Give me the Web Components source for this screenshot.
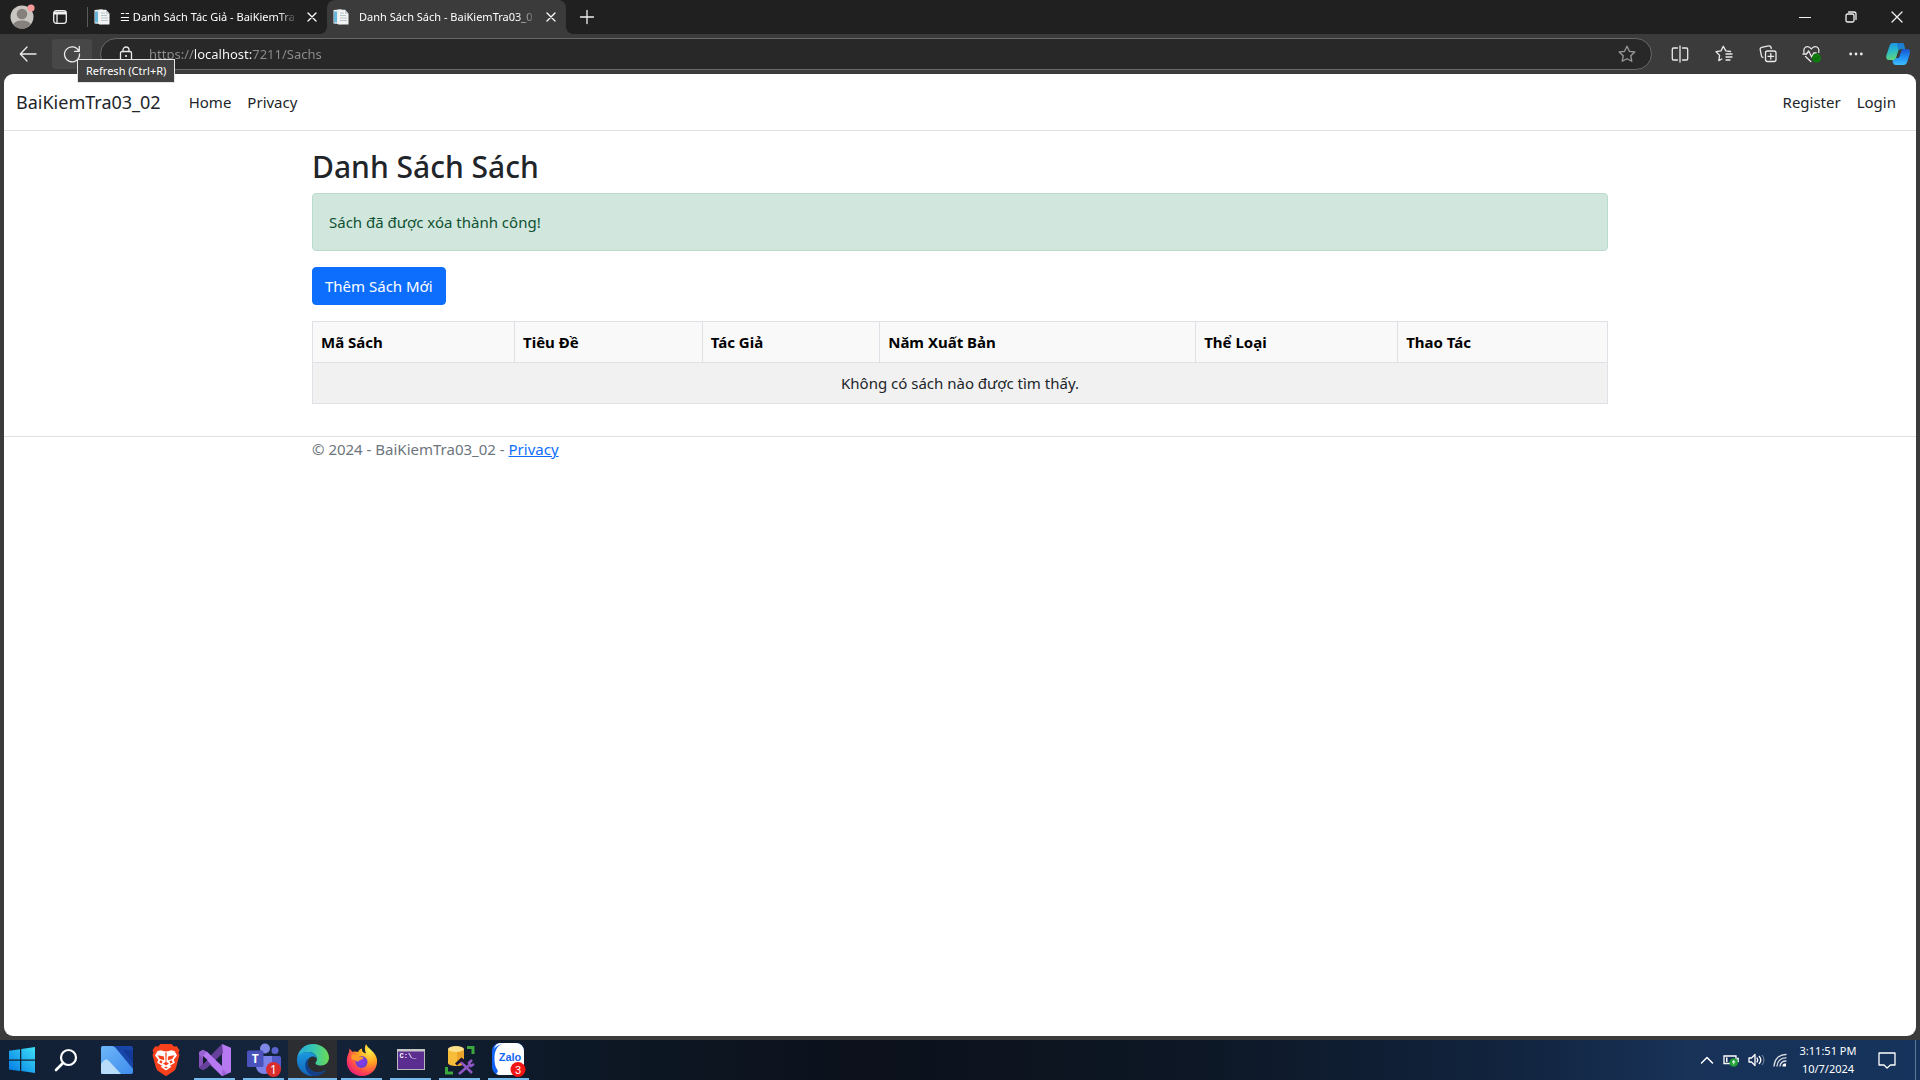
<!DOCTYPE html>
<html lang="vi">
<head>
<meta charset="utf-8">
<title>Danh Sách Sách - BaiKiemTra03_02</title>
<style>
html, body { margin: 0; height: 100%; }
body { font-family: "Noto Sans", "Open Sans", sans-serif; font-size: 15px; line-height: 24px; color: #212529; background: #3b3b3b; }
</style>
</head>
<body>
<desk-screen>
  <edge-window>
    <edge-titlebar slot="title">
      <edge-tab label="☱ Danh Sách Tác Giả - BaiKiemTra"></edge-tab>
      <edge-tab label="Danh Sách Sách - BaiKiemTra03_0" active></edge-tab>
    </edge-titlebar>
    <edge-toolbar slot="toolbar" url="https://localhost:7211/Sachs"></edge-toolbar>
    <site-header>BaiKiemTra03_02</site-header>
    <site-main>
      <span slot="heading">Danh Sách Sách</span>
      <site-alert>Sách đã được xóa thành công!</site-alert>
      <site-button>Thêm Sách Mới</site-button>
      <book-table></book-table>
    </site-main>
    <site-footer>© 2024 - BaiKiemTra03_02 - </site-footer>
  </edge-window>
  <task-bar slot="taskbar"></task-bar>
</desk-screen>
<script>
const define = (name, html, setup) => {
  const t = document.createElement('template');
  t.innerHTML = html;
  customElements.define(name, class extends HTMLElement {
    constructor() {
      super();
      this.attachShadow({ mode: 'open' }).append(t.content.cloneNode(true));
    }
    connectedCallback() { if (setup) setup(this, this.shadowRoot); }
  });
};

const line = (d, extra = '') => `<g fill="none" stroke="currentColor" stroke-linecap="round" stroke-linejoin="round" stroke-width="1.3" ${extra}>${d}</g>`;
const ICONS = {
  profile: ['24 24', `<clipPath id="c"><circle cx="12" cy="12" r="11.5"/></clipPath><circle cx="12" cy="12" r="11.5" fill="#c9c6c2"/><g clip-path="url(#c)" fill="#85807c"><circle cx="12" cy="9" r="5.3"/><path d="M2 24c0-6 4-8.5 10-8.5S22 18 22 24z"/></g><circle cx="21" cy="3" r="3.6" fill="#f99a9c"/>`],
  workspace: ['16 16', line('<rect x="1.7" y="1.7" width="12.6" height="12.6" rx="2.5"/><path d="M5 4.5v9.500"/>') + '<path d="M2 2.500h12v3H2z" fill="currentColor"/>'],
  page: ['16 16', '<path d="M.5 1l8-.8v15L.5 14.500z" fill="#e9eef1"/><path d="M1 2.500h3v11H1z" fill="#67b7dc"/><path d="M5 .8h7l3.500 4v10.700H5z" fill="#f2f3f3"/><path d="M7 4h4M7 6.500h6M7 9h7M7 11.500h7" stroke="#b9c3c9" stroke-width="1"/><path d="M12 .8l3.500 4H12z" fill="#c4cbd0"/>'],
  close: ['10 10', line('<path d="M0 0l10 10M10 0L0 10"/>')],
  cross: ['8 8', line('<path d="M0 0l8 8M8 0L0 8"/>')],
  plus: ['14 14', line('<path d="M7 .5v13M.5 7h13"/>')],
  min: ['12 12', line('<path d="M1 6.500h10"/>', 'shape-rendering="crispEdges"')],
  restore: ['12 12', line('<rect x="1" y="3" width="8" height="8" rx="1.500"/><path d="M3.500 1H9a2 2 0 0 1 2 2v5.500"/>')],
  back: ['18 16', line('<path d="M17 8H1.500M8 1L1.300 8 8 15"/>')],
  refresh: ['18 18', line('<path d="M15.800 6.200A7.500 7.500 0 1 0 16.500 9M16.300 1.500v4.800h-4.800"/>')],
  lock: ['16 16', line('<rect x="2.500" y="5.500" width="11" height="9" rx="1.500"/><path d="M5 5.500V4a3 3 0 0 1 6 0v1.500"/>') + '<circle cx="8" cy="10" r="1.100" fill="currentColor"/>'],
  star: ['18 18', line('<path d="M9 1.300l2.400 5 5.400.7-4 3.800 1 5.500L9 13.700l-4.800 2.600 1-5.500-4-3.800 5.400-.7z"/>')],
  split: ['18 18', line('<path d="M6.500 3h-4A1.300 1.300 0 0 0 1.300 4.300v9.400A1.300 1.300 0 0 0 2.500 15h4M11.500 3h4a1.300 1.300 0 0 1 1.200 1.300v9.400a1.300 1.300 0 0 1-1.200 1.300h-4M9 1v16"/>')],
  favs: ['18 18', line('<path d="M15.500 6.500l-4.700-.6L8.300 1.300 6 5.900l-4.900.8 3.500 3.700-.8 5.300 3-1.700M11 9h6M11 12h6M11 15h4"/>')],
  collect: ['18 18', line('<rect x="6.500" y="6" width="10.500" height="10.500" rx="2"/><path d="M11.800 8.500v5.600M9 11.300h5.600M4 12.500A2.500 2.500 0 0 1 2.300 10L1.200 4.700A2 2 0 0 1 2.700 2.300L9.500.9A2 2 0 0 1 12 2.500l.3 1"/>')],
  heart: ['20 18', line('<path d="M2 7.500C1 4 3 1.600 5.500 1.600 7.500 1.600 8.500 2.800 9.300 4c.8-1.200 1.900-2.400 3.900-2.400 2.600 0 4.500 2.400 3.500 5.900M3.500 11.500l5.300 5M1 9h3.500L6.700 6l3 6 2-4h2.500"/>') + '<circle cx="14.500" cy="13" r="4.500" fill="#0f7b0f"/><path d="M12.500 13l1.500 1.500 2.500-3" stroke="#075c07" fill="none"/>'],
  dots: ['14 14', '<g fill="currentColor"><circle cx="1.700" cy="7" r="1.400"/><circle cx="7" cy="7" r="1.400"/><circle cx="12.300" cy="7" r="1.400"/></g>'],
  copilot: ['24 24', '<defs><linearGradient id="a" x2=".2" y2="1"><stop stop-color="#1b8fe8"/><stop offset=".5" stop-color="#2bb9c8"/><stop offset="1" stop-color="#5fd67e"/></linearGradient><linearGradient id="b" x2="0" y2="1"><stop stop-color="#1a54c9"/><stop offset=".5" stop-color="#1f8df5"/><stop offset="1" stop-color="#3fc0ff"/></linearGradient></defs><path d="M7 1h9c2 0 2 1.500 2.500 4l.5 2h-4c-2 0-2.500 1-3 2.500L10 16c-.5 1.500-1.500 2-3 2H3c-3 0-3-3-2.500-5L3.500 4C4 2 5 1 7 1z" fill="url(#a)"/><path d="M17 7h4c3 0 3.500 2 2.700 5l-2.500 8c-.7 2-1.700 3-3.700 3H10c-2 0-2.700-1-3.300-3L6.500 18c2 0 3-.5 3.600-2h1.500c1 0 1.500-.5 1.900-1.500l2-6C16 7.500 16.500 7 17 7z" fill="url(#b)"/><path d="M11 1h5c2 0 2 1.500 2.500 4l.5 2h-4l-3 1z" fill="#1769cf" opacity=".65"/>'],
  start: ['26 26', '<defs><linearGradient id="a" x1="0" y1="1" x2="1" y2="0"><stop stop-color="#0078e6"/><stop offset="1" stop-color="#3fe0f5"/></linearGradient></defs><path d="M0 3.700L11 2.200v10.300H0zM12.300 2L26 0v12.500H12.300zM0 13.700h11V24L0 22.500zM12.300 13.700H26V26l-13.700-2z" fill="url(#a)"/>'],
  search: ['24 24', '<circle cx="14.500" cy="9.500" r="7.500" fill="none" stroke="#fff" stroke-width="2.200"/><path d="M9 15l-7 7" stroke="#fff" stroke-width="2.600" stroke-linecap="round"/>'],
  photos: ['32 28', '<defs><linearGradient id="a" x2="1" y2="1"><stop stop-color="#6db6f8"/><stop offset="1" stop-color="#3f8ded"/></linearGradient></defs><rect width="32" height="28" rx="2" fill="#1746a8"/><path d="M22 4h10v13z" fill="#123a96"/><path d="M2 0h9q2 0 3.500 1.700L32 23v3a2 2 0 0 1-2 2H0V2a2 2 0 0 1 2-2z" fill="url(#a)"/><path d="M0 17.500l3-3q2.500-2 5 .5L20 28H2a2 2 0 0 1-2-2z" fill="#b9dcfb"/>'],
  brave: ['28 32', '<path d="M8.500 0h11l2.500 2.600 2.700-.4 2.800 4-1 2.600L27.500 11l-3.400 12.500c-.6 2-1.200 2.700-2.600 3.700l-6.300 4.400a2 2 0 0 1-2.400 0l-6.300-4.400c-1.400-1-2-1.700-2.600-3.700L.5 11l1-2.200-1-2.600 2.800-4 2.700.4z" fill="#f9401c"/><path d="M9 6.200l2 .8q3 .8 6 0l2-.8 3.500.8 2.500 4.500-3.300 4.300 1.100 3-5 3 1.500 1L14 26.500l-5.300-3.700 1.500-1-5-3 1.100-3L3 11.500 5.500 7z" fill="#fff"/><path d="M5.500 11.300l6 1 .8 2.200-.5 1.700-4-1.200zM22.500 11.300l-6 1-.8 2.200.5 1.700 4-1.200zM13.300 8.500h1.400l-.3 9.500 2.600 1.500-3 2-3-2 2.600-1.500zM8.300 16.300l2.200 1-.7 2.200-2.500-.7zM19.700 16.300l-2.200 1 .7 2.200 2.500-.7zM12 23.500l2-1 2 1-2 1z" fill="#f9401c"/>'],
  vs: ['32 32', '<path d="M23 0l9 3.700v24.600L23 32z" fill="#b679f1"/><path d="M0 8.500l4-2.700v20.400L0 23.500z" fill="#8452b8"/><path d="M4 5.800l4 2L28 30l-5 2L0 10.500V8z" fill="#9b62d4"/><path d="M23 0l1 9L8 24l-4 2.200-4-2.700z" fill="#67409c"/><path d="M8 7.800L24 23l-1 9L4 12z" fill="#b679f1"/><path d="M4 12v8l4.500-4z" fill="#101a2a"/>'],
  teams: ['34 34', '<circle cx="18" cy="5.500" r="5" fill="#7f88e6"/><circle cx="28" cy="7.500" r="3.500" fill="#5b63d0"/><path d="M22 13h10a2 2 0 0 1 2 2v8c0 4-3 6-6 6s-6-2-6-6z" fill="#525bc9"/><path d="M10 13h15v10c0 5-3 8-7.500 8S9 28 9 23z" fill="#7b83eb"/><rect y="7.500" width="16.500" height="16.500" rx="1.500" fill="#4a53bc"/><text x="8.200" y="20" fill="#fff" font-size="12" font-weight="700" text-anchor="middle">T</text><circle cx="26.500" cy="26.500" r="7.500" fill="#d92c2c"/><text x="26.500" y="31" fill="#fff" font-size="12" text-anchor="middle">1</text>'],
  edge: ['32 32', '<defs><linearGradient id="a" x2="1"><stop stop-color="#2aa8df"/><stop offset=".5" stop-color="#35c6b4"/><stop offset="1" stop-color="#6ddb50"/></linearGradient><linearGradient id="b" x2="0" y2="1"><stop stop-color="#1b9ae0"/><stop offset="1" stop-color="#1261b8"/></linearGradient></defs><path d="M0 15C1 6 7.500 0 16 0c9.500 0 16 7 16 13.500 0 5-3.500 8-8 8-4 0-5.500-1.500-5.500-2.500 0-1 1.500-1.500 1.500-4C20 11.500 16.500 8 11.500 8 5.500 8 1 11.500 0 15z" fill="url(#a)"/><path d="M0 15c1-4 5-7 10.500-7 5.500 0 9.500 3.500 9.500 7-1-2-3-2.500-4.500-2.500-3 0-5 3-5 6.500 0 6 5.500 9.500 10 9.500 3 0 5.500-.8 8.500-2.700C26.500 29.500 22 32 16 32 7 32-.5 25 0 15z" fill="url(#b)"/><path d="M11.500 14C6 18.500 7.500 29 16 32c-3 0 8 1.500 13-6.200-3 1.900-5.500 2.700-8.500 2.700-4.500 0-10-3.500-10-9.500 0-2 .3-3.700 1-5z" fill="#123f87"/>'],
  firefox: ['32 32', '<defs><radialGradient id="a" cx=".75" cy=".2" r=".95"><stop stop-color="#fff04a"/><stop offset=".4" stop-color="#ffa51f"/><stop offset=".75" stop-color="#ff4450"/><stop offset="1" stop-color="#e01a80"/></radialGradient><radialGradient id="b"><stop stop-color="#8a3cf0"/><stop offset="1" stop-color="#6a3fd0"/></radialGradient></defs><path d="M20 0c2 5 10 8 11 15.500C32 25 25 32 16 32S.5 25.500.8 17c.1-4 1-6.500 2.200-8.500l.5-4L6.500 8c2-.8 4-.5 5.500 0C13 6 14 5 16 4.500 15.500 7 17 9 20 9.500 18.500 6 18.500 3 20 0z" fill="url(#a)"/><circle cx="15.500" cy="18" r="6" fill="url(#b)"/><path d="M5.500 11c3-1 6 0 8 1.500 2 0 3.500.5 4 2-1.500 1.500-4.500 1-5.500 3.500-1.500-1.500-4-3-6.500-2.500z" fill="#ff9a2a"/>'],
  cmd: ['28 22', '<rect x=".5" y=".5" width="27" height="20" fill="#5b2d91" stroke="#b9b9b9"/><path d="M0 0h28v2.500H0z" fill="#c6c6c6"/><text x="2.500" y="9" fill="#fff" font-size="7" font-family="Liberation Mono, monospace" font-weight="700">C:\\_</text>'],
  ssms: ['30 30', '<path d="M3 4v14c0 2 4 3 8 3s8-1 8-3V4z" fill="#f6bc3a"/><path d="M12 4h7v14c0 1.500-3 2.500-7 3z" fill="#eca42b"/><ellipse cx="11" cy="4" rx="8" ry="3" fill="#fde08a"/><path d="M22 2.500h6V9M8 28H1.500v-6" fill="none" stroke="#3ca63f" stroke-width="3"/><path d="M15 16l12 12M27 15l-3 3 2 3 3-2M25 19.500L14 29" fill="none" stroke="#8f58c4" stroke-width="2.500"/><path d="M11 19.500l5.500-5 4 3" fill="none" stroke="#1b1430" stroke-width="3"/>'],
  zalo: ['34 34', '<path d="M8 0h16a8 8 0 0 1 8 8v16a8 8 0 0 1-8 8H8a8 8 0 0 1-8-8V8a8 8 0 0 1 8-8z" fill="#0f62f5"/><path d="M12 0h12a8 8 0 0 1 8 8v16a8 8 0 0 1-8 8H8c-1.500 0-2-.5-4-1 1.500-1 2-2.500 1.500-4C3 24 2.500 20 2.500 15c0-7 2.500-13 9.500-15z" fill="#fff"/><path d="M8 0h6C8 1 4 3 2 6 3 2 5 0 8 0z" fill="#fff"/><text x="18" y="18" fill="#1668f2" font-size="11" font-family="Liberation Sans, sans-serif" font-weight="700" text-anchor="middle">Zalo</text><circle cx="26" cy="26.500" r="7.500" fill="#f01414"/><text x="26" y="31" fill="#fff" font-size="11" font-family="Liberation Sans, sans-serif" text-anchor="middle">3</text>'],
  chevron: ['14 14', line('<path d="M1.500 10L7 4.500 12.500 10"/>', 'style="stroke-width:1.500"')],
  battery: ['16 14', '<path d="M1 3h12v7.500H1zM14 5.500h1.200v3H14" fill="none" stroke="#fff" stroke-width="1.300"/><path d="M3 4.500h1.500V9H3z" fill="#fff"/><circle cx="10.700" cy="9.500" r="4.300" fill="#22a038"/><path d="M10.700 6.700l2 2.800h-1.500v2h-1v-2H8.700z" fill="#dff5df"/>'],
  sound: ['16 14', line('<path d="M1 5h2.500L7 1.500v11L3.500 9H1zM9 5q1.500 2 0 4M11.300 3.500q3 3.500 0 7"/>') + '<path d="M14 2q4 5 0 10" fill="none" stroke="#8190a6" stroke-width="1"/>'],
  wifi: ['14 14', line('<path d="M1 13C1.500 6 6 1.500 13 1.500M4 13C4.500 8 8 4.800 13 4.800M7 13c.5-3 3-5 6-5"/>', 'opacity=".85"') + '<path d="M9.500 13.500v-1c0-1 1-2 2-2h1.500v3z" fill="#fff"/>'],
  notify: ['18 18', line('<path d="M1 2h16v12h-4.500L9 17l-3-3H1z"/>')]
};
define('ui-icon', `<style>:host{display:inline-flex;flex:none}svg{display:block;width:100%;height:100%;overflow:visible}</style>`, (el, root) => {
  if (root.querySelector('svg')) return;
  const [box, art] = ICONS[el.getAttribute('name')];
  const [w, h] = box.split(' ');
  el.style.width = w + 'px';
  el.style.height = h + 'px';
  root.innerHTML += `<svg viewBox="0 0 ${box}" aria-hidden="true">${art}</svg>`;
});

define('desk-screen', `<style>
:host{display:flex;flex-direction:column;min-height:100vh}
slot:not([name])::slotted(*){flex:1}
</style><slot></slot><slot name="taskbar"></slot>`);

define('edge-window', `<style>
:host{display:flex;flex-direction:column;background:#3b3b3b}
.page{flex:1;margin:0 4px 4px;background:#fff;border-radius:9px;overflow:hidden}
</style><slot name="title"></slot><slot name="toolbar"></slot><div class="page"><slot></slot></div>`);

define('edge-titlebar', `<style>
:host{display:flex;height:34px;background:#202020;color:#f0f0f0}
button{border:0;padding:0;margin:0;background:none;color:inherit;display:flex;align-items:center;justify-content:center}
.lead{display:flex;align-items:center;gap:18px;padding:0 19px 0 10px}
.sep{width:1px;height:20px;align-self:center;background:#5a5a5a}
.new{width:42px}
.grow{flex:1}
.win{display:flex}
.win button{width:46px}
</style>
<div class="lead"><button aria-label="Profile"><ui-icon name="profile"></ui-icon></button><button aria-label="Workspaces"><ui-icon name="workspace"></ui-icon></button></div>
<div class="sep"></div>
<slot></slot>
<button class="new" aria-label="New tab"><ui-icon name="plus"></ui-icon></button>
<div class="grow"></div>
<div class="win"><button aria-label="Minimize"><ui-icon name="min"></ui-icon></button><button aria-label="Restore"><ui-icon name="restore"></ui-icon></button><button aria-label="Close"><ui-icon name="close"></ui-icon></button></div>`);

define('edge-tab', `<style>
:host{display:flex;align-items:center;width:239px;box-sizing:border-box;padding:0 11px 0 6px;gap:10px;font-size:11px;line-height:16px;color:#fff;position:relative}
:host([active]){background:#3b3b3b;border-radius:8px 8px 0 0}
:host([active])::before,:host([active])::after{content:"";position:absolute;bottom:0;width:8px;height:8px}
:host([active])::before{left:-8px;background:radial-gradient(circle at 0 0,transparent 8px,#3b3b3b 8px)}
:host([active])::after{right:-8px;background:radial-gradient(circle at 100% 0,transparent 8px,#3b3b3b 8px)}
span{flex:1;min-width:0;overflow:hidden;white-space:nowrap;-webkit-mask-image:linear-gradient(90deg,#000 calc(100% - 20px),transparent)}
button{border:0;padding:0;background:none;color:inherit;display:flex}
</style><ui-icon name="page"></ui-icon><span></span><button aria-label="Close tab"><ui-icon name="cross"></ui-icon></button>`,
(el, root) => { root.querySelector('span').textContent = el.getAttribute('label'); });

define('edge-toolbar', `<style>
:host{display:flex;align-items:center;height:40px;padding:0 4px 0 8px;color:#eaeaea;background:#3b3b3b}
button{border:0;padding:0;margin:0;background:none;color:inherit;font:inherit;display:flex;align-items:center;justify-content:center;width:40px;height:30px;border-radius:4px}
.nav{display:flex;gap:4px}
.refresh{position:relative;background:#474747}
.tip{position:absolute;left:25px;top:20px;z-index:2;box-sizing:border-box;border:1px solid #e4e4e4;background:#414141;color:#fff;font-size:11px;line-height:22px;padding:0 8px;white-space:nowrap}
.bar{flex:1;display:flex;align-items:center;box-sizing:border-box;height:32px;margin:0 8px 0 8px;padding:0 15px 0 17px;gap:15px;border:1px solid #686868;border-radius:16px;background:#282828}
.bar button{width:18px}
.bar .star{color:#9a9a9a}
input{flex:1;min-width:0;border:0;padding:0;outline:0;font:13px/20px "Noto Sans","Open Sans",sans-serif;color:#9b9b9b;
background:linear-gradient(90deg,#8e8e8e 46px,#fff 46px 104px,#8e8e8e 104px);-webkit-background-clip:text;background-clip:text;-webkit-text-fill-color:transparent}
.tools{display:flex;gap:4px}
.tools .last{margin:0 -2px}
</style>
<div class="nav"><button aria-label="Back"><ui-icon name="back"></ui-icon></button><button class="refresh" aria-label="Refresh"><ui-icon name="refresh"></ui-icon><span class="tip" role="tooltip">Refresh (Ctrl+R)</span></button></div>
<div class="bar"><ui-icon name="lock"></ui-icon><input type="text" aria-label="Address" spellcheck="false"><button class="star" aria-label="Add to favorites"><ui-icon name="star"></ui-icon></button></div>
<div class="tools"><button aria-label="Split screen"><ui-icon name="split"></ui-icon></button><button aria-label="Favorites"><ui-icon name="favs"></ui-icon></button><button aria-label="Collections"><ui-icon name="collect"></ui-icon></button><button aria-label="Browser essentials"><ui-icon name="heart"></ui-icon></button><button aria-label="Settings and more"><ui-icon name="dots"></ui-icon></button><button class="last" aria-label="Copilot"><ui-icon name="copilot"></ui-icon></button></div>`,
(el, root) => { root.querySelector('input').value = el.getAttribute('url'); });

define('site-header', `<style>
:host{display:block;border-bottom:1px solid #dee2e6;margin-bottom:16px}
nav{display:flex;align-items:center;height:56px;padding:0 12px}
a{color:#212529;text-decoration:none;padding:0 8px}
.brand{font-size:18px;margin-right:20px;padding:0;color:#212529}
.grow{flex:1}
</style><nav><a class="brand" href="#"><slot></slot></a><a href="#">Home</a><a href="#">Privacy</a><div class="grow"></div><a href="#">Register</a><a href="#">Login</a></nav>`);

define('site-main', `<style>
:host{display:block;box-sizing:border-box;max-width:1320px;margin:0 auto;padding:0 12px 32px}
h1{margin:0 0 6px;font-size:30px;line-height:40px;font-weight:500}
</style><h1><slot name="heading"></slot></h1><slot></slot>`);

define('site-alert', `<style>
:host{display:block;padding:16px;margin-bottom:16px;border:1px solid #badbcc;border-radius:4px;background:#d1e7dd;color:#0f5132}
</style><div role="status"><slot></slot></div>`);

define('site-button', `<style>
:host{display:flex;margin-bottom:16px}
button{font:inherit;color:#fff;background:#0d6efd;border:1px solid #0d6efd;border-radius:4px;padding:6px 12px}
</style><button type="button"><slot></slot></button>`);

define('book-table', `<style>
:host{display:block}
table{width:100%;border-collapse:collapse;table-layout:fixed}
th,td{border:1px solid #dee2e6;padding:8px;line-height:24px}
th{text-align:left;font-size:15px;font-weight:700;color:#000;background:#f9f9f9}
td{text-align:center;background:#f1f1f1}
</style><table><colgroup><col style="width:15.6%"><col style="width:14.5%"><col style="width:13.7%"><col style="width:24.4%"><col style="width:15.6%"><col></colgroup>
<thead><tr><th scope="col">Mã Sách</th><th scope="col">Tiêu Đề</th><th scope="col">Tác Giả</th><th scope="col">Năm Xuất Bản</th><th scope="col">Thể Loại</th><th scope="col">Thao Tác</th></tr></thead>
<tbody><tr><td colspan="6">Không có sách nào được tìm thấy.</td></tr></tbody></table>`);

define('site-footer', `<style>
:host{display:block;border-top:1px solid #dee2e6;color:#6c757d}
div{box-sizing:border-box;max-width:1320px;margin:0 auto;padding:0 12px}
a{color:#0d6efd}
</style><div><slot></slot><a href="#">Privacy</a></div>`);

define('task-bar', `<style>
:host{display:flex;height:40px;color:#fff;background:linear-gradient(90deg,#122036,#14243a 15%,#0d1826 30%,#0c111b 45%,#0d1725 62%,#11233d 78%,#183258 88%,#15335c)}
button{border:0;padding:0;margin:0;background:none;color:inherit;font:inherit;display:flex;align-items:center;justify-content:center;position:relative;width:49px;box-sizing:border-box}
.start{width:44px}
.find{width:44px}
.run::after{content:"";position:absolute;left:4px;right:4px;bottom:0;height:2px;background:#76b9ed}
.on{background:#2b2d31}
.on::after{left:0;right:0}
.apps{display:flex;padding-left:4px}
.grow{flex:1}
.tray{display:flex;align-items:center;gap:9px}
.clock{display:block;width:66px;height:40px;margin:0 17px 0 8px;padding:2px 0;font-size:11px;line-height:18px;text-align:center;white-space:nowrap}
.clock span{display:block}
.note{width:18px}
.edge{width:1px;margin-left:19px;margin-right:4px;background:#5f7694}
</style>
<button class="start" aria-label="Start"><ui-icon name="start"></ui-icon></button><button class="find" aria-label="Search"><ui-icon name="search"></ui-icon></button>
<div class="apps"><button aria-label="Photos"><ui-icon name="photos"></ui-icon></button><button aria-label="Brave"><ui-icon name="brave"></ui-icon></button><button class="run" aria-label="Visual Studio"><ui-icon name="vs"></ui-icon></button><button class="run" aria-label="Teams"><ui-icon name="teams"></ui-icon></button><button class="run on" aria-label="Edge"><ui-icon name="edge"></ui-icon></button><button class="run" aria-label="Firefox"><ui-icon name="firefox"></ui-icon></button><button class="run" aria-label="Console"><ui-icon name="cmd"></ui-icon></button><button class="run" aria-label="SQL Server Management Studio"><ui-icon name="ssms"></ui-icon></button><button class="run" aria-label="Zalo"><ui-icon name="zalo"></ui-icon></button></div>
<div class="grow"></div>
<div class="tray"><ui-icon name="chevron"></ui-icon><ui-icon name="battery"></ui-icon><ui-icon name="sound"></ui-icon><ui-icon name="wifi"></ui-icon></div>
<button class="clock"><span>3:11:51 PM</span><span>10/7/2024</span></button>
<button class="note" aria-label="Notifications"><ui-icon name="notify"></ui-icon></button><div class="edge"></div>`);
</script>
</body>
</html>
